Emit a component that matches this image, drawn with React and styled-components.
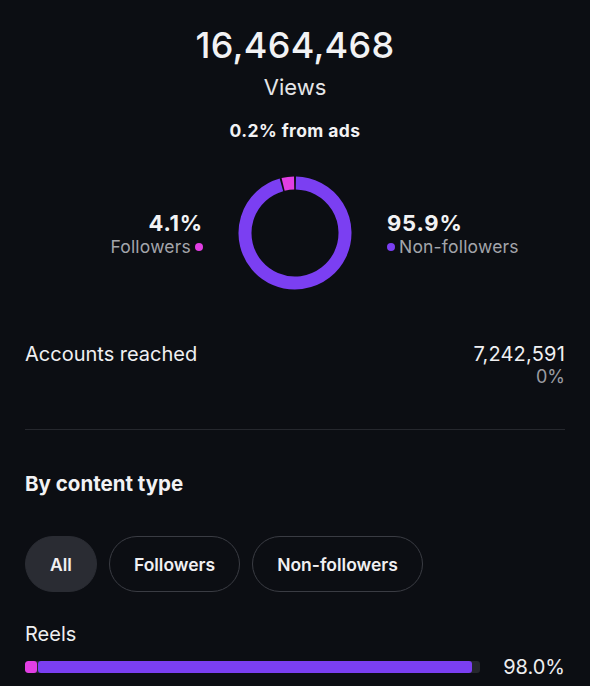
import React from "react";
import styled, { createGlobalStyle } from "styled-components";

const Global = createGlobalStyle`
  html, body { margin: 0; padding: 0; background: #0c0e13; }
  body { font-family: Inter, "Noto Sans", sans-serif; color: #f2f2f4; -webkit-font-smoothing: antialiased; }
`;

const Page = styled.div`
  width: 590px;
  height: 686px;
  overflow: hidden;
  background: #0c0e13;
  padding: 0 25px;
  box-sizing: border-box;
  display: flex;
  flex-direction: column;
`;

const Hero = styled.div`
  display: flex;
  flex-direction: column;
  align-items: center;
  padding-top: 22px;
`;

const BigNumber = styled.div`
  font-size: 36px;
  font-weight: 500;
  line-height: 46px;
  letter-spacing: 0.3px;
`;

const Label = styled.div`
  font-size: 22px;
  font-weight: 400;
  color: #e6e6e8;
  line-height: 30px;
  margin-top: 4px;
`;

const AdsNote = styled.div`
  font-size: 17.5px;
  font-weight: 700;
  letter-spacing: 0.4px;
  margin-top: 18px;
  line-height: 22px;
`;

const DonutRow = styled.div`
  display: grid;
  grid-template-columns: 1fr auto 1fr;
  align-items: center;
  column-gap: 35px;
  margin-top: 34px;
`;

const Side = styled.div`
  display: flex;
  flex-direction: column;
  align-items: ${(p) => (p.$right ? "flex-start" : "flex-end")};
  margin-top: 1px;
`;

const Pct = styled.div`
  font-size: 22px;
  font-weight: 700;
  letter-spacing: 0.8px;
  line-height: 26px;
`;

const Legend = styled.div`
  display: flex;
  align-items: center;
  gap: 4px;
  font-size: 17.5px;
  letter-spacing: 0.2px;
  color: #a3a5ab;
  line-height: 22px;
`;

const Dot = styled.span`
  width: 8px;
  height: 8px;
  border-radius: 50%;
  background: ${(p) => p.$color};
  display: inline-block;
`;

const MetricRow = styled.div`
  display: flex;
  justify-content: space-between;
  align-items: flex-start;
  margin-top: 52px;
`;

const MetricName = styled.div`
  font-size: 20px;
  line-height: 24px;
  color: #f0f0f2;
`;

const MetricValues = styled.div`
  display: flex;
  flex-direction: column;
  align-items: flex-end;
`;

const MetricValue = styled.div`
  font-size: 20px;
  letter-spacing: 0.2px;
  line-height: 24px;
  color: #f0f0f2;
`;

const MetricSub = styled.div`
  font-size: 18px;
  line-height: 22px;
  color: #9a9ca2;
`;

const Divider = styled.div`
  height: 1px;
  background: #26282e;
  margin-top: 41px;
`;

const SectionTitle = styled.div`
  font-size: 20.5px;
  font-weight: 700;
  line-height: 28px;
  margin-top: 40px;
`;

const Chips = styled.div`
  display: flex;
  gap: 12px;
  margin-top: 38px;
`;

const Chip = styled.div`
  height: 56px;
  box-sizing: border-box;
  padding: 0 24px;
  border-radius: 28px;
  display: flex;
  align-items: center;
  font-size: 17.5px;
  font-weight: 600;
  color: #f0f0f2;
  background: ${(p) => (p.$active ? "#2a2c33" : "transparent")};
  border: 1px solid ${(p) => (p.$active ? "#2a2c33" : "#3a3c43")};
`;

const BarLabel = styled.div`
  font-size: 20px;
  line-height: 24px;
  color: #eeeef0;
  margin-top: 30px;
`;

const BarRow = styled.div`
  display: flex;
  align-items: center;
  gap: 23px;
  margin-top: 9px;
`;

const Track = styled.div`
  flex: 1;
  height: 12px;
  background: #25272d;
  border-radius: 3px;
  display: flex;
  gap: 1px;
  overflow: hidden;
`;

const Segment = styled.div`
  height: 100%;
  background: ${(p) => p.$color};
  border-radius: 3px;
`;

const BarValue = styled.div`
  font-size: 20px;
  line-height: 24px;
  color: #eeeef0;
`;

const PURPLE = "#7b3ff2";
const PINK = "#e23ee3";

function arc(cx, cy, r, a0, a1) {
  const rad = (a) => ((a - 90) * Math.PI) / 180;
  const x0 = cx + r * Math.cos(rad(a0));
  const y0 = cy + r * Math.sin(rad(a0));
  const x1 = cx + r * Math.cos(rad(a1));
  const y1 = cy + r * Math.sin(rad(a1));
  const large = a1 - a0 > 180 ? 1 : 0;
  return `M ${x0} ${y0} A ${r} ${r} 0 ${large} 1 ${x1} ${y1}`;
}

function Donut() {
  const r = 50;
  const pinkDeg = 360 * 0.041;
  const gap = 2;
  return (
    <svg width="114" height="114" viewBox="0 0 114 114">
      <path d={arc(57, 57, r, -pinkDeg + gap / 2, -gap / 2)} fill="none" stroke={PINK} strokeWidth="13" />
      <path d={arc(57, 57, r, gap / 2, 360 - pinkDeg - gap / 2)} fill="none" stroke={PURPLE} strokeWidth="13" />
    </svg>
  );
}

export default function App() {
  return (
    <>
      <Global />
      <Page>
        <Hero>
          <BigNumber>16,464,468</BigNumber>
          <Label>Views</Label>
          <AdsNote>0.2% from ads</AdsNote>
        </Hero>
        <DonutRow>
          <Side>
            <Pct>4.1%</Pct>
            <Legend>
              Followers <Dot $color={PINK} />
            </Legend>
          </Side>
          <Donut />
          <Side $right>
            <Pct>95.9%</Pct>
            <Legend>
              <Dot $color={PURPLE} />
              Non-followers
            </Legend>
          </Side>
        </DonutRow>
        <MetricRow>
          <MetricName>Accounts reached</MetricName>
          <MetricValues>
            <MetricValue>7,242,591</MetricValue>
            <MetricSub>0%</MetricSub>
          </MetricValues>
        </MetricRow>
        <Divider />
        <SectionTitle>By content type</SectionTitle>
        <Chips>
          <Chip $active>All</Chip>
          <Chip>Followers</Chip>
          <Chip>Non-followers</Chip>
        </Chips>
        <BarLabel>Reels</BarLabel>
        <BarRow>
          <Track>
            <Segment $color={PINK} style={{ width: "12px" }} />
            <Segment $color={PURPLE} style={{ width: "434px" }} />
          </Track>
          <BarValue>98.0%</BarValue>
        </BarRow>
      </Page>
    </>
  );
}
